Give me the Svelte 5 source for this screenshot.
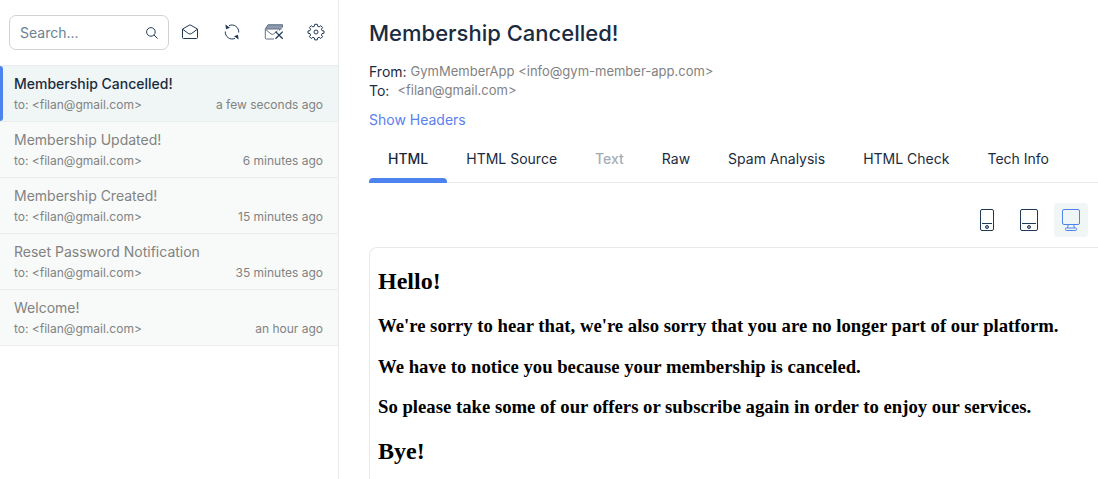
<script>
  const messages = [
    { subject: 'Membership Cancelled!', time: 'a few seconds ago' },
    { subject: 'Membership Updated!', time: '6 minutes ago' },
    { subject: 'Membership Created!', time: '15 minutes ago' },
    { subject: 'Reset Password Notification', time: '35 minutes ago' },
    { subject: 'Welcome!', time: 'an hour ago' }
  ];
  const tabs = ['HTML', 'HTML Source', 'Text', 'Raw', 'Spam Analysis', 'HTML Check', 'Tech Info'];

  let selected = $state(0);
  let tab = $state('HTML');
  let device = $state('desktop');
  let query = $state('');
</script>

<div class="app">
  <aside>
    <div class="toolbar">
      <div class="search">
        <input type="text" aria-label="Search messages" placeholder="Search..." bind:value={query} />
        <svg width="12" height="12" viewBox="0 0 12 12"><circle cx="4.9" cy="4.9" r="4.3" /><path d="M8 8l3.6 3.6" /></svg>
      </div>
      <div class="actions">
        <button aria-label="Mark all as read">
          <svg width="16" height="16" viewBox="0 0 16 16"><path d="M.5 5 8 .8 15.500 5v8.500a1 1 0 0 1-1 1h-13a1 1 0 0 1-1-1zM1 5.500l5.400 4q1.600 1.100 3.200 0l5.400-4" /></svg>
        </button>
        <button aria-label="Refresh">
          <svg width="16" height="16" viewBox="0 0 16 16"><path d="M5 1.600a6.900 6.900 0 0 1 9.700 6.900M11 14.400A6.900 6.900 0 0 1 1.300 7.500" /><path class="solid" d="M1.400.6 2 5.200l4-1.400zM14.600 15.400 14 10.800l-4 1.400z" /></svg>
        </button>
        <button aria-label="Delete all messages">
          <svg width="20" height="16" viewBox="0 0 20 16"><path class="shade" d="M4 .5h14.500v3l-1 2-1.500.7-.5-1.200H1.500z" /><path d="M4 .8h14.500v2.400M1.300 5h14.200v1.500M1.300 5v9a1 1 0 0 0 1 1H10M1.300 5l2.700-4.200M2 5.800l5 4.200q1.300.8 2.600 0l4-3.200" class="soft" /><path d="M11.500 7.600l7.200 7.200M18.700 7.600l-7.200 7.200" stroke-width="1.300" /></svg>
        </button>
        <button aria-label="Inbox settings">
          <svg width="18" height="18" viewBox="0 0 18 18"><circle cx="9" cy="9" r="2" /><path d="M7.700 1.300h2.600l.4 2 1.400.6 1.700-1.200 1.800 1.800-1.200 1.700.6 1.400 2 .4v2.200l-2 .4-.6 1.400 1.200 1.700-1.800 1.800-1.700-1.200-1.400.6-.4 2H7.700l-.4-2-1.400-.6-1.700 1.200-1.800-1.800 1.200-1.700-.6-1.400-2-.4V8l2-.4.6-1.400-1.200-1.700 1.800-1.800 1.700 1.200 1.400-.6z" stroke-linejoin="round" /></svg>
        </button>
      </div>
    </div>
    <ul>
      {#each messages as message, i}
        <li>
          <button class="message" class:active={selected === i} onclick={() => (selected = i)}>
            <span class="subject">{message.subject}</span>
            <span class="meta"><span>to: &lt;filan@gmail.com&gt;</span><span>{message.time}</span></span>
          </button>
        </li>
      {/each}
    </ul>
  </aside>

  <main>
    <h1>Membership Cancelled!</h1>
    <dl>
      <div><dt>From:</dt><dd>GymMemberApp &lt;info@gym-member-app.com&gt;</dd></div>
      <div class="to"><dt>To:</dt><dd>&lt;filan@gmail.com&gt;</dd></div>
    </dl>
    <a class="headers" href="#headers">Show Headers</a>

    <div class="tabs" role="tablist">
      {#each tabs as name}
        <button role="tab" aria-selected={tab === name} class:current={tab === name} disabled={name === 'Text'} onclick={() => (tab = name)}>{name}</button>
      {/each}
    </div>

    <div class="devices">
      <button aria-label="Mobile view" class:on={device === 'mobile'} onclick={() => (device = 'mobile')}>
        <svg width="16" height="24" viewBox="0 0 16 24"><rect x="1.500" y="1.500" width="13" height="21" rx="1.500" /><path d="M3 15.500h10" /><circle class="knob" cx="8" cy="19" r="1.500" /></svg>
      </button>
      <button aria-label="Tablet view" class:on={device === 'tablet'} onclick={() => (device = 'tablet')}>
        <svg width="20" height="24" viewBox="0 0 20 24"><rect x="1.500" y="1.500" width="17" height="21" rx="1.500" /><path d="M3 15.500h14" /><circle class="knob" cx="10" cy="19" r="1.500" /></svg>
      </button>
      <button aria-label="Desktop view" class:on={device === 'desktop'} onclick={() => (device = 'desktop')}>
        <svg width="20" height="24" viewBox="0 0 20 24"><rect x="1.500" y="1.500" width="17" height="15" rx="1.500" /><path d="M7 16.500v2.500l-1 1M13 16.500v2.500l1 1" /><rect x="4.500" y="20" width="11" height="2.500" rx="1" /></svg>
      </button>
    </div>

    <article>
      <h2>Hello!</h2>
      <h3>We're sorry to hear that, we're also sorry that you are no longer part of our platform.</h3>
      <h3>We have to notice you because your membership is canceled.</h3>
      <h3>So please take some of our offers or subscribe again in order to enjoy our services.</h3>
      <h2>Bye!</h2>
    </article>
  </main>
</div>

<style>
  :global(body) { background: #fff; }
  .app {
    display: grid;
    grid-template-columns: 339px minmax(0, 1fr);
    min-height: 100vh;
    overflow: hidden;
    font-family: Inter, sans-serif;
    font-size: 14px;
    line-height: 20px;
    color: #1b2b40;
  }
  button {
    font: inherit;
    color: inherit;
    background: none;
    border: 0;
    padding: 0;
    cursor: pointer;
  }
  svg { display: block; fill: none; stroke: #1f3a57; stroke-width: 1; }
  .solid { fill: #1f3a57; stroke: none; }
  .shade { fill: #8f9bab; stroke: none; }
  .soft { stroke: #5f7186; }
  .knob { fill: #a9b3bf; }

  aside { border-right: 1px solid #e8eaea; }
  .toolbar {
    display: flex;
    align-items: center;
    gap: 11px;
    padding: 15px 12px 15px 9px;
  }
  .search {
    display: flex;
    align-items: center;
    flex: 1;
    min-width: 0;
    box-sizing: border-box;
    height: 35px;
    padding: 0 10px;
    border: 1px solid #cfd3d6;
    border-radius: 7px;
  }
  .search input {
    flex: 1;
    min-width: 0;
    padding: 0;
    border: 0;
    outline: 0;
    background: none;
    font: inherit;
    color: inherit;
  }
  .search input::placeholder { color: #6b7f93; opacity: 1; }
  .actions { display: flex; gap: 22px; padding-bottom: 1px; }
  .actions button { display: grid; place-items: center; width: 20px; height: 20px; }

  ul { list-style: none; margin: 0; padding: 0; border-top: 1px solid #e9eded; }
  .message {
    display: flex;
    flex-direction: column;
    gap: 1px;
    box-sizing: border-box;
    width: 100%;
    height: 56px;
    padding: 8px 15px 6px 14px;
    border-bottom: 1px solid #e9eded;
    background: #f8faf9;
    text-align: left;
    color: #828282;
  }
  .message.active { position: relative; background: #f0f6f6; }
  .message.active::before {
    content: '';
    position: absolute;
    inset: 0 auto 0 0;
    width: 3px;
    border-radius: 0 3px 3px 0;
    background: #4c83ee;
  }
  .active .subject { color: #1b2b40; font-weight: 500; }
  .meta { display: flex; justify-content: space-between; font-size: 12px; }

  main { padding: 20px 0 0 30px; }
  h1 { margin: 0; font-size: 22px; line-height: 26px; font-weight: 500; }
  dl { margin: 16px 0 0; line-height: 19px; }
  dl div { display: flex; gap: 4px; }
  dl .to { gap: 8px; }
  dd { margin: 0; font-size: 13px; color: #828282; }
  .headers { display: block; width: max-content; margin-top: 10px; color: #5b80f0; text-decoration: none; }

  .tabs { display: flex; margin-top: 10px; border-bottom: 1px solid #e8eaea; }
  .tabs button {
    position: relative;
    height: 42px;
    padding: 0 19px 4px;
    white-space: nowrap;
  }
  .tabs button:disabled { color: #a4adb7; font-weight: 500; }
  .tabs .current { font-weight: 500; }
  .tabs .current::after {
    content: '';
    position: absolute;
    inset: auto 0 -1px;
    height: 5px;
    border-radius: 4px 4px 0 0;
    background: #4c83ee;
  }

  .devices { display: flex; justify-content: flex-end; gap: 8px; padding: 20px 10px 10px 0; }
  .devices button { display: grid; place-items: center; width: 34px; height: 34px; border-radius: 4px; }
  .devices .on { background: #f0f6f6; }
  .devices .on svg { stroke: #4c83ee; }

  article {
    display: flow-root;
    min-height: 240px;
    padding: 0 8px;
    border: 1px solid #e8eaea;
    border-right: 0;
    border-radius: 8px 0 0 0;
    font-family: 'Liberation Serif', serif;
    font-size: 16px;
    line-height: normal;
    color: #000;
  }
</style>
